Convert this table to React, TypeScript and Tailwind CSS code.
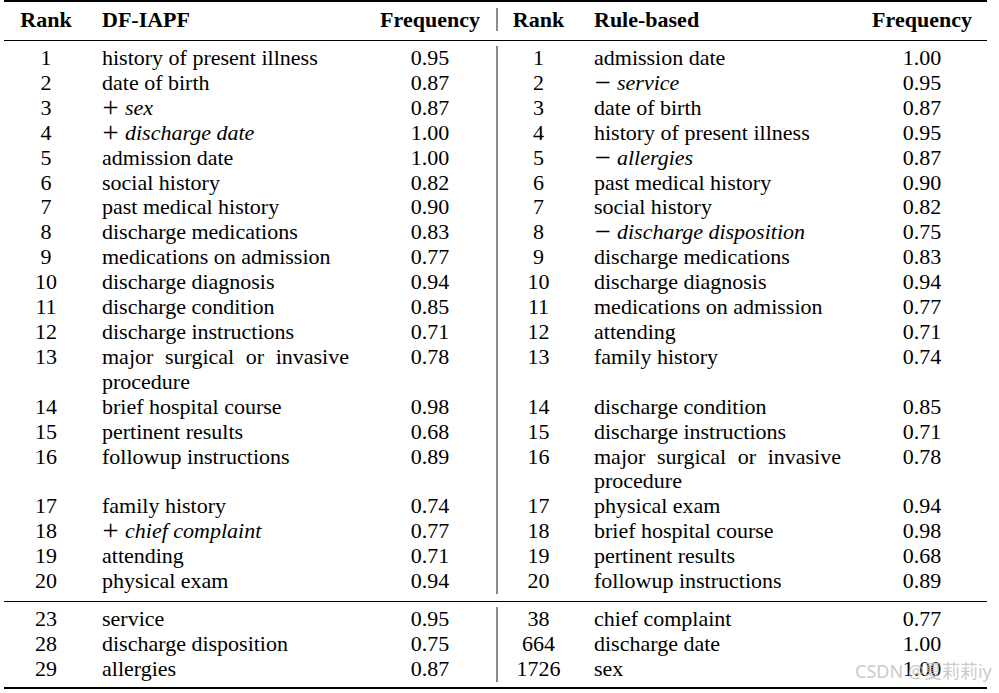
type Row = [string, string, string]

// '+' / '−' в начале строки — помеченная (курсивом) запись
const LEFT: Row[] = [
  ['1', 'history of present illness', '0.95'],
  ['2', 'date of birth', '0.87'],
  ['3', '+sex', '0.87'],
  ['4', '+discharge date', '1.00'],
  ['5', 'admission date', '1.00'],
  ['6', 'social history', '0.82'],
  ['7', 'past medical history', '0.90'],
  ['8', 'discharge medications', '0.83'],
  ['9', 'medications on admission', '0.77'],
  ['10', 'discharge diagnosis', '0.94'],
  ['11', 'discharge condition', '0.85'],
  ['12', 'discharge instructions', '0.71'],
  ['13', 'major surgical or invasive procedure', '0.78'],
  ['14', 'brief hospital course', '0.98'],
  ['15', 'pertinent results', '0.68'],
  ['16', 'followup instructions', '0.89'],
  ['17', 'family history', '0.74'],
  ['18', '+chief complaint', '0.77'],
  ['19', 'attending', '0.71'],
  ['20', 'physical exam', '0.94'],
]

const RIGHT: Row[] = [
  ['1', 'admission date', '1.00'],
  ['2', '−service', '0.95'],
  ['3', 'date of birth', '0.87'],
  ['4', 'history of present illness', '0.95'],
  ['5', '−allergies', '0.87'],
  ['6', 'past medical history', '0.90'],
  ['7', 'social history', '0.82'],
  ['8', '−discharge disposition', '0.75'],
  ['9', 'discharge medications', '0.83'],
  ['10', 'discharge diagnosis', '0.94'],
  ['11', 'medications on admission', '0.77'],
  ['12', 'attending', '0.71'],
  ['13', 'family history', '0.74'],
  ['14', 'discharge condition', '0.85'],
  ['15', 'discharge instructions', '0.71'],
  ['16', 'major surgical or invasive procedure', '0.78'],
  ['17', 'physical exam', '0.94'],
  ['18', 'brief hospital course', '0.98'],
  ['19', 'pertinent results', '0.68'],
  ['20', 'followup instructions', '0.89'],
]

const LEFT_TAIL: Row[] = [
  ['23', 'service', '0.95'],
  ['28', 'discharge disposition', '0.75'],
  ['29', 'allergies', '0.87'],
]

const RIGHT_TAIL: Row[] = [
  ['38', 'chief complaint', '0.77'],
  ['664', 'discharge date', '1.00'],
  ['1726', 'sex', '1.00'],
]

const GRID = 'grid grid-cols-[84px_276px_132px_81px_280px_130px]'

function Name({ text }: { text: string }) {
  const mark = text[0]
  if (mark === '+' || mark === '−') {
    // знак крупнее (как математический + / − в LaTeX), масштаб не трогает строку
    return (
      <>
        <span className="inline-block w-[17px] text-center mr-[6px] scale-[1.3]">{mark}</span>
        <i>{text.slice(1)}</i>
      </>
    )
  }
  return <>{text}</>
}

function Section({ left, right }: { left: Row[]; right: Row[] }) {
  return (
    <div className={`${GRID} leading-[24.9px] items-start`}>
      {left.map((l, i) => {
        const r = right[i]
        return (
          <div key={i} className="contents">
            <div className="text-center self-stretch">{l[0]}</div>
            <div className="pl-[14px] pr-[15px] text-justify">
              <Name text={l[1]} />
            </div>
            <div className="text-center">{l[2]}</div>
            <div className="text-center self-stretch border-l-2 border-[#8c8c8c] pl-[2px]">{r[0]}</div>
            <div className="pl-[17px] pr-[16px] text-justify">
              <Name text={r[1]} />
            </div>
            <div className="text-center">{r[2]}</div>
          </div>
        )
      })}
    </div>
  )
}

export default function App() {
  return (
    <div className="relative bg-white w-[999px] h-[693px] font-['Liberation_Serif',serif] text-[22px] text-black">
      <div className="w-[983px] ml-[4px]">
        <div className="h-[2px] bg-black" />
        <div className="h-[6px]" />
        <div className={`${GRID} font-bold leading-[23px]`}>
          <div className="text-center">Rank</div>
          <div className="pl-[14px]">DF-IAPF</div>
          <div className="text-center">Frequency</div>
          <div className="text-center border-l-2 border-[#8c8c8c] pl-[2px]">Rank</div>
          <div className="pl-[17px]">Rule-based</div>
          <div className="text-center">Frequency</div>
        </div>
        <div className="h-[9px]" />
        <div className="h-px bg-black" />
        <div className="h-[5px]" />
        <Section left={LEFT} right={RIGHT} />
        <div className="h-[7px]" />
        <div className="h-px bg-black" />
        <div className="h-[5px]" />
        <Section left={LEFT_TAIL} right={RIGHT_TAIL} />
        <div className="h-[5px]" />
        <div className="h-[2px] bg-black" />
      </div>

      {/* водяной знак */}
      <div className="absolute left-[855px] top-[659px] text-[18px] leading-[24px] text-[#bdbdbd]/80 font-['Noto_Sans','Noto_Sans_CJK_SC',sans-serif]">
        CSDN @夏莉莉iy
      </div>
    </div>
  )
}
